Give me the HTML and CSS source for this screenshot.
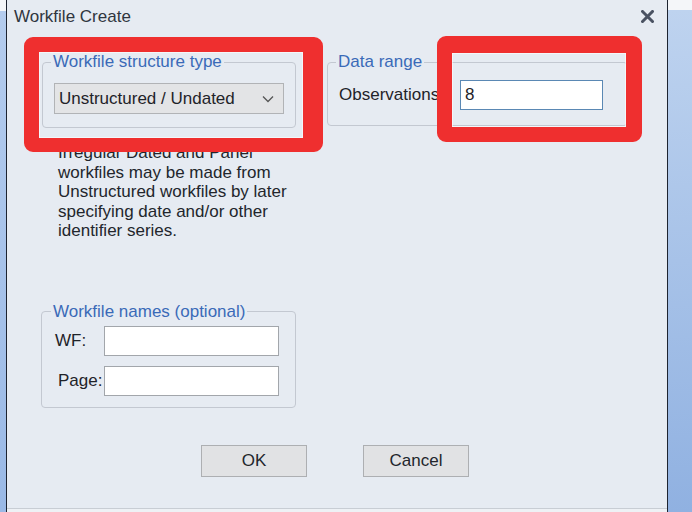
FILE: index.html
```html
<!DOCTYPE html>
<html>
<head>
<meta charset="utf-8">
<link rel="stylesheet" href="styles.css">
</head>
<body>
<div class="strip strip-left"></div>
<div class="dialog">
  <div class="panel">
    <div class="titlebar">
      <span class="title">Workfile Create</span>
      <svg class="close" width="13" height="13" viewBox="0 0 13 13"><path d="M1.5 1.5 L11.5 11.5 M11.5 1.5 L1.5 11.5" stroke="#4a5262" stroke-width="3" stroke-linecap="square" fill="none"/></svg>
    </div>
    <div class="content">
      <div class="top-row">
        <fieldset class="group group-type">
          <legend>Workfile structure type</legend>
          <div class="select">
            <span>Unstructured / Undated</span>
            <svg class="chev" width="12" height="8" viewBox="0 0 12 8"><path d="M1 1.5 L6 6.5 L11 1.5" stroke="#555" stroke-width="1.3" fill="none"/></svg>
          </div>
        </fieldset>
        <fieldset class="group group-range">
          <legend>Data range</legend>
          <div class="obs-row">
            <span class="obs-label">Observations:</span>
            <div class="input input-focus">8</div>
          </div>
        </fieldset>
      </div>
      <p class="note">Irregular Dated and Panel<br>workfiles may be made from<br>Unstructured workfiles by later<br>specifying date and/or other<br>identifier series.</p>
      <fieldset class="group group-names">
        <legend>Workfile names (optional)</legend>
        <div class="name-row">
          <span class="name-label">WF:</span>
          <div class="input input-name"></div>
        </div>
        <div class="name-row name-row-page">
          <span class="name-label name-label-page">Page:</span>
          <div class="input input-name"></div>
        </div>
      </fieldset>
      <div class="buttons">
        <div class="btn">OK</div>
        <div class="btn">Cancel</div>
      </div>
    </div>
  </div>
</div>
<div class="strip strip-right"></div>
<div class="mark mark-1"></div>
<div class="mark mark-2"></div>
</body>
</html>
```

FILE: styles.css
```css
html, body {
  margin: 0;
  padding: 0;
}
body {
  width: 692px;
  height: 512px;
  overflow: hidden;
  display: flex;
  position: relative;
  font-family: "Liberation Sans", Arial, sans-serif;
  font-size: 17px;
  color: #1f2329;
  background: #eef1f5;
}
.strip {
  height: 512px;
}
.strip-left {
  width: 6px;
  background: linear-gradient(to bottom, #f4f6f9 0, #f4f6f9 11px, #b4ccee 11px, #9ab9e6 100%);
}
.strip-right {
  flex: 1;
  background: linear-gradient(to bottom, #f4f6f9 0, #f4f6f9 10px, #bed3ef 10px, #90b1e1 100%);
}
.dialog {
  width: 662px;
  height: 512px;
  box-sizing: border-box;
  border-left: 1px solid #1d2330;
  border-right: 1px solid #1d2330;
  background: #eef1f5;
}
.panel {
  height: 508px;
  border-bottom: 1px solid #c8cdd4;
  background: #e6ebf2;
  display: flex;
  flex-direction: column;
}
.titlebar {
  height: 34px;
  display: flex;
  align-items: center;
  justify-content: space-between;
  padding: 0 13px 0 7px;
}
.title {
  color: #2f3640;
  font-size: 17px;
  margin-top: -1px;
}
.close {
  margin-top: -1px;
}
.content {
  padding-left: 34px;
  display: flex;
  flex-direction: column;
}
.top-row {
  display: flex;
  align-items: flex-start;
  margin-top: 19px;
}
.group {
  margin: 0;
  border: 1px solid #c3c8d1;
  border-radius: 4px;
  padding: 0;
  box-sizing: border-box;
}
.group legend {
  color: #3a6ab8;
  font-size: 17px;
  line-height: 18px;
  padding: 0 2px;
  margin-left: -3px;
}
.group-type {
  width: 254px;
  margin-left: 1px;
  padding: 12px 11px 13px 11px;
}
.select {
  width: 230px;
  height: 31px;
  box-sizing: border-box;
  border: 1px solid #b1b3b6;
  background: #e3e4e6;
  display: flex;
  align-items: center;
  justify-content: space-between;
  padding: 0 9px 0 4px;
}
.chev {
  margin-top: 1px;
}
.group-range {
  width: 301px;
  margin-left: 31px;
  padding: 9px 11px 15px 11px;
}
.obs-row {
  display: flex;
  align-items: center;
}
.obs-label {
  width: 121px;
  flex: none;
  white-space: nowrap;
}
.input {
  box-sizing: border-box;
  background: #ffffff;
  border: 1px solid #a2a6ab;
}
.input-focus {
  width: 143px;
  height: 30px;
  border-color: #5a88b4;
  padding: 0 4px;
  line-height: 28px;
}
.note {
  margin: 15px 0 0 17px;
  line-height: 19.5px;
  color: #22262c;
}
.group-names {
  width: 255px;
  margin-top: 62px;
  padding: 5px 16px 11px 13px;
}
.group-names legend {
  margin-left: -4px;
}
.name-row {
  display: flex;
  align-items: center;
}
.name-row-page {
  margin-top: 10px;
}
.name-label {
  width: 49px;
  flex: none;
}
.name-label-page {
  width: 46px;
  padding-left: 3px;
}
.input-name {
  width: 175px;
  height: 30px;
}
.buttons {
  display: flex;
  margin-top: 37px;
  margin-left: 160px;
  gap: 56px;
}
.btn {
  width: 106px;
  height: 32px;
  box-sizing: border-box;
  border: 1px solid #adafb2;
  background: #e1e2e4;
  display: flex;
  align-items: center;
  justify-content: center;
  color: #22262c;
}
.mark {
  position: absolute;
  box-sizing: border-box;
  border: 15px solid #ef2f2f;
  border-radius: 9px;
  box-shadow: inset 0 0 0 1px rgba(255, 255, 255, 0.55);
}
.mark-1 {
  left: 24px;
  top: 37px;
  width: 299px;
  height: 115px;
  border-width: 15px 20px 14px 15px;
}
.mark-2 {
  left: 437px;
  top: 36px;
  width: 205px;
  height: 106px;
  border-width: 17px 16px 15px 15px;
}
```
